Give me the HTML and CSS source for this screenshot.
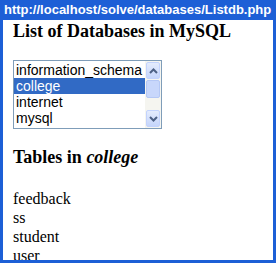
FILE: index.html
```html
<!DOCTYPE html>
<html>
<head>
    <title>Listdb.php</title>
    <link rel="stylesheet" href="styles.css">
</head>

<body>

<div class="window">
    <div class="titlebar">http://localhost/solve/databases/Listdb.php</div>

    <div class="content">
        <h2 class="heading">List of Databases in MySQL</h2>

        <div class="listbox">
            <div class="options">
                <div class="option">information_schema</div>
                <div class="option selected">college</div>
                <div class="option">internet</div>
                <div class="option">mysql</div>
            </div>
            <div class="scrollbar">
                <div class="sb-button">
                    <svg width="9" height="6" viewBox="0 0 9 6"><path d="M1 5 L4.5 1.5 L8 5" fill="none" stroke="#4d6185" stroke-width="2"/></svg>
                </div>
                <div class="sb-thumb"></div>
                <div class="sb-track"></div>
                <div class="sb-button">
                    <svg width="9" height="6" viewBox="0 0 9 6"><path d="M1 1 L4.5 4.5 L8 1" fill="none" stroke="#4d6185" stroke-width="2"/></svg>
                </div>
            </div>
        </div>

        <h2 class="heading tables">Tables in <i>college</i></h2>

        <div class="tablelist">
            feedback<br>
            ss<br>
            student<br>
            user<br>
        </div>
    </div>
</div>

</body>
</html>
```

FILE: styles.css
```css
body {
    margin: 0;
    width: 276px;
    height: 263px;
    overflow: hidden;
    font-family: 'Liberation Serif', serif;
}

.window {
    box-sizing: border-box;
    width: 276px;
    height: 263px;
    border: 3px solid #1d5fd6;
    border-top: none;
    background: #fff;
    overflow: hidden;
}

.titlebar {
    height: 20px;
    margin: 0 -3px;
    padding-left: 4px;
    background: #1d5fd6;
    color: #fff;
    font-family: 'Liberation Sans', sans-serif;
    font-weight: bold;
    font-size: 13px;
    line-height: 19px;
    white-space: nowrap;
}

.content {
    padding-left: 10px;
}

.heading {
    margin: 1px 0 0 0;
    font-size: 18px;
    line-height: 20px;
}

.heading.tables {
    margin-top: 18px;
}

.listbox {
    display: flex;
    width: 147px;
    height: 67px;
    margin-top: 19px;
    border: 1px solid #7f9db9;
    background: #fff;
    font-family: 'Liberation Sans', sans-serif;
    font-size: 14px;
}

.options {
    flex: 1;
    padding-top: 1px;
    overflow: hidden;
}

.option {
    height: 16px;
    line-height: 16px;
    padding-left: 2px;
    white-space: nowrap;
    color: #000;
}

.option.selected {
    background: #316ac5;
    color: #fff;
}

.scrollbar {
    display: flex;
    flex-direction: column;
    width: 16px;
    background: #f5f5f0;
}

.sb-button {
    display: flex;
    justify-content: center;
    align-items: center;
    height: 15px;
    margin: 1px;
    border: 1px solid #c3d3fd;
    border-radius: 2px;
    background: linear-gradient(#e4ecfd, #c5d5fb);
}

.sb-thumb {
    height: 16px;
    margin: 0 1px;
    border: 1px solid #b5c8f5;
    border-radius: 2px;
    background: #c8d7fb;
}

.sb-track {
    flex: 1;
}

.tablelist {
    margin-top: 22px;
    font-size: 16px;
    line-height: 19px;
}
```
